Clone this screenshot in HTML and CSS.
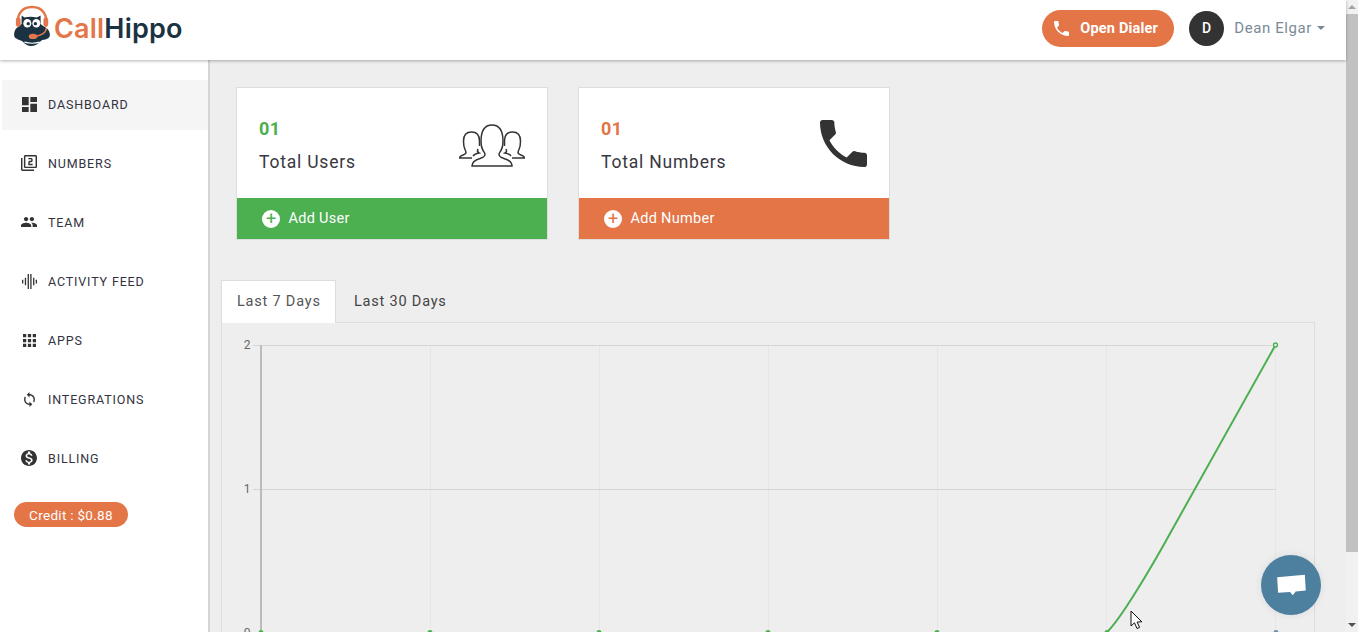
FILE: index.html
```html
<!DOCTYPE html>
<html lang="en">
<head>
    <meta charset="UTF-8">
    <title>CallHippo Dashboard</title>
    <link rel="stylesheet" href="styles.css">
</head>
<body>
<div class="app">
    <div class="main">
        <header class="topbar">
            <a class="logo">
                <svg class="logo-mark" viewBox="0 0 40 44" width="38" height="42">
                    <path d="M2 35c-3-2-2-7 0-10 2-2 4-3 6-5l0-9 3 2c4-1 9-1 13 0l4-2 0 9c2 2 5 3 7 5 3 3 4 8 1 10-3 2-6 1-8 3-3 3-6 5-10 5s-6-2-8-4c-2-2-5-2-8-4z" fill="#1b3243"/>
                    <path d="M5 21C2 12 7 2 19 2s17 10 14 19" fill="none" stroke="#e4774a" stroke-width="2.600"/>
                    <rect x="2" y="13" width="5" height="10" rx="2.500" fill="#e4774a"/>
                    <rect x="31" y="13" width="5" height="10" rx="2.500" fill="#e4774a"/>
                    <ellipse cx="14" cy="19" rx="4.200" ry="4.500" fill="#fff"/>
                    <ellipse cx="23.500" cy="19" rx="4.200" ry="4.500" fill="#fff"/>
                    <circle cx="15" cy="19.500" r="1.800" fill="#1b3243"/>
                    <circle cx="22.500" cy="19.500" r="1.800" fill="#1b3243"/>
                    <path d="M34 24c0 5-6 8-13 9" fill="none" stroke="#e4774a" stroke-width="1.600"/>
                    <ellipse cx="20" cy="33" rx="4.500" ry="2.800" fill="#e4774a"/>
                    <path d="M11 39c5 1.500 11 1.500 16 0" fill="none" stroke="#fff" stroke-width="1.200"/>
                </svg>
                <span class="logo-text"><span class="logo-call">Call</span>Hippo</span>
            </a>
            <div class="topbar-right">
                <button class="dialer-btn">
                    <svg viewBox="3 3 18 18" width="15" height="15"><path fill="#fff" d="M6.620 10.790c1.440 2.830 3.760 5.140 6.590 6.590l2.200-2.200c.27-.27.67-.36 1.020-.24 1.120.37 2.330.57 3.570.57.55 0 1 .45 1 1V20c0 .55-.45 1-1 1-9.390 0-17-7.610-17-17 0-.55.45-1 1-1h3.500c.55 0 1 .45 1 1 0 1.250.2 2.450.57 3.570.11.35.03.74-.25 1.020l-2.200 2.200z"/></svg>
                    Open Dialer
                </button>
                <div class="avatar">D</div>
                <div class="user-name">Dean Elgar<span class="caret"></span></div>
            </div>
        </header>

        <div class="body">
            <nav class="sidebar">
                <a class="nav-item active">
                    <span class="nav-slot"><svg class="nav-icon" width="15" height="15" viewBox="3 3 18 18"><path d="M3 13h8V3H3v10zm0 8h8v-6H3v6zm10 0h8V11h-8v10zm0-18v6h8V3h-8z"/></svg></span>
                    DASHBOARD
                </a>
                <a class="nav-item">
                    <span class="nav-slot"><svg class="nav-icon" width="16" height="16" viewBox="1 1 22 22"><path d="M3 5H1v16c0 1.100.9 2 2 2h16v-2H3V5zm18-4H7c-1.100 0-2 .9-2 2v14c0 1.100.9 2 2 2h14c1.100 0 2-.9 2-2V3c0-1.100-.9-2-2-2zm0 16H7V3h14v14zm-4-4h-4v-2h2c1.100 0 2-.89 2-2V7c0-1.110-.9-2-2-2h-4v2h4v2h-2c-1.100 0-2 .89-2 2v4h6v-2z"/></svg></span>
                    NUMBERS
                </a>
                <a class="nav-item">
                    <span class="nav-slot"><svg class="nav-icon" width="16" height="16" viewBox="1 1 22 22"><path d="M16 11c1.660 0 2.990-1.340 2.990-3S17.660 5 16 5c-1.660 0-3 1.340-3 3s1.340 3 3 3zm-8 0c1.660 0 2.990-1.340 2.990-3S9.660 5 8 5C6.340 5 5 6.340 5 8s1.340 3 3 3zm0 2c-2.330 0-7 1.170-7 3.500V19h14v-2.500c0-2.330-4.670-3.500-7-3.500zm8 0c-.29 0-.62.02-.97.05 1.160.84 1.970 1.970 1.970 3.450V19h6v-2.500c0-2.330-4.670-3.500-7-3.500z"/></svg></span>
                    TEAM
                </a>
                <a class="nav-item">
                    <span class="nav-slot"><svg class="nav-icon" width="15" height="15" viewBox="0 0 16 16"><path d="M0 6h1.400v4H0zM3 4h1.400v8H3zM6 0h1.400v16H6zM8.800 0h1.400v16H8.800zM11.800 4h1.400v8h-1.400zM14.600 6H16v4h-1.400z"/></svg></span>
                    ACTIVITY FEED
                </a>
                <a class="nav-item">
                    <span class="nav-slot"><svg class="nav-icon" width="13" height="13" viewBox="4 4 16 16"><path d="M4 8h4V4H4v4zm6 12h4v-4h-4v4zm-6 0h4v-4H4v4zm0-6h4v-4H4v4zm6 0h4v-4h-4v4zm6-10v4h4V4h-4zm-6 4h4V4h-4v4zm6 6h4v-4h-4v4zm0 6h4v-4h-4v4z"/></svg></span>
                    APPS
                </a>
                <a class="nav-item">
                    <span class="nav-slot"><svg class="nav-icon" width="13" height="15" viewBox="4 1 16 22"><path d="M12 4V1L8 5l4 4V6c3.310 0 6 2.690 6 6 0 1.010-.25 1.970-.7 2.800l1.460 1.460C19.540 15.030 20 13.570 20 12c0-4.420-3.580-8-8-8zm0 14c-3.310 0-6-2.690-6-6 0-1.010.25-1.970.7-2.800L5.240 7.740C4.460 8.970 4 10.430 4 12c0 4.420 3.580 8 8 8v3l4-4-4-4v3z"/></svg></span>
                    INTEGRATIONS
                </a>
                <a class="nav-item">
                    <span class="nav-slot"><svg class="nav-icon" width="16" height="16" viewBox="2 2 20 20"><path d="M12 2C6.480 2 2 6.480 2 12s4.480 10 10 10 10-4.480 10-10S17.520 2 12 2zm1.410 16.090V20h-2.670v-1.930c-1.710-.36-3.160-1.460-3.270-3.400h1.960c.1 1.050.82 1.870 2.650 1.870 1.960 0 2.400-.98 2.400-1.590 0-.83-.44-1.610-2.670-2.140-2.480-.6-4.180-1.620-4.180-3.670 0-1.720 1.390-2.840 3.110-3.210V4h2.670v1.950c1.860.45 2.790 1.860 2.850 3.390H14.300c-.05-1.110-.64-1.870-2.220-1.870-1.500 0-2.400.68-2.400 1.640 0 .84.65 1.390 2.670 1.910s4.180 1.390 4.180 3.910c-.01 1.830-1.380 2.830-3.120 3.160z"/></svg></span>
                    BILLING
                </a>
                <div class="credit">Credit : $0.88</div>
            </nav>

            <main class="content">
                <div class="cards">
                    <div class="card">
                        <div class="card-body">
                            <div class="card-text">
                                <div class="card-count green">01</div>
                                <div class="card-label">Total Users</div>
                            </div>
                            <svg class="users-icon" viewBox="0 0 66 43" width="66" height="43" fill="none" stroke="#333" stroke-width="1.500">
                                <path d="M13 42c0-4 3-6 8-7.500 3-1 5-2 5-4 0-1.500-1-2.500-2-4-1.500-2.500-2-5-2-9C22 7 25 1 33 1s11 6 11 16.500c0 4-.5 6.500-2 9-1 1.500-2 2.500-2 4 0 2 2 3 5 4 5 1.500 8 3.500 8 7.500z"/>
                                <path d="M20.500 22v-5C20.500 11 17.500 8 12.500 8S4.500 11 4.500 17c0 4 .5 6.500 1.500 8.500.5 1 1 2 1 3 0 1.500-1.500 2-3 2.500-2 .7-3.300 1.700-3.500 3H13"/>
                                <path d="M19 25c-1 2-1 3 1 4-3 .5-5 1.500-6 3"/>
                                <g transform="translate(66 0) scale(-1 1)">
                                    <path d="M20.500 22v-5C20.500 11 17.500 8 12.500 8S4.500 11 4.500 17c0 4 .5 6.500 1.500 8.500.5 1 1 2 1 3 0 1.500-1.500 2-3 2.500-2 .7-3.300 1.700-3.500 3H13"/>
                                    <path d="M19 25c-1 2-1 3 1 4-3 .5-5 1.500-6 3"/>
                                </g>
                            </svg>
                        </div>
                        <a class="card-foot green-bg">
                            <span class="plus green">+</span>
                            Add User
                        </a>
                    </div>
                    <div class="card">
                        <div class="card-body">
                            <div class="card-text">
                                <div class="card-count orange">01</div>
                                <div class="card-label">Total Numbers</div>
                            </div>
                            <svg class="phone-icon" viewBox="3 3 18 18" width="47" height="47"><path fill="#333" d="M6.620 10.790c1.440 2.830 3.760 5.140 6.590 6.590l2.200-2.200c.27-.27.67-.36 1.020-.24 1.120.37 2.330.57 3.570.57.55 0 1 .45 1 1V20c0 .55-.45 1-1 1-9.390 0-17-7.610-17-17 0-.55.45-1 1-1h3.500c.55 0 1 .45 1 1 0 1.250.2 2.450.57 3.570.11.35.03.74-.25 1.020l-2.200 2.200z"/></svg>
                        </div>
                        <a class="card-foot orange-bg">
                            <span class="plus orange">+</span>
                            Add Number
                        </a>
                    </div>
                </div>

                <div class="tabs">
                    <a class="tab active">Last 7 Days</a>
                    <a class="tab">Last 30 Days</a>
                </div>
                <div class="chart-panel">
                    <svg class="chart" viewBox="222 323 1092 320" width="1092" height="320">
                        <path stroke="#e6e6e6" d="M430.500 345V640M599.500 345V640M768.500 345V640M937.500 345V640M1106.500 345V640M1275.500 345V640"/>
                        <path stroke="#d6d6d6" d="M253 345.500H1276M253 489.500H1276"/>
                        <path d="M261 345V640" stroke="#bbb" stroke-width="2"/>
                        <g class="axis-label">
                            <text x="247" y="349">2</text>
                            <text x="247" y="493">1</text>
                            <text x="247" y="637">0</text>
                        </g>
                        <path d="M1107 632C1120 620 1150 570 1172 530L1275.500 345" fill="none" stroke="#4caf50" stroke-width="2"/>
                        <circle cx="1275.500" cy="345" r="2" fill="#eee" stroke="#4caf50" stroke-width="1.300"/>
                        <g fill="#4caf50">
                            <circle cx="261" cy="632.500" r="2.500"/>
                            <circle cx="430" cy="632.500" r="2.500"/>
                            <circle cx="599" cy="632.500" r="2.500"/>
                            <circle cx="768" cy="632.500" r="2.500"/>
                            <circle cx="937" cy="632.500" r="2.500"/>
                            <circle cx="1107" cy="632.500" r="2.500"/>
                        </g>
                        <circle cx="1276" cy="632.500" r="2.500" fill="#6f8fa8"/>
                    </svg>
                </div>
            </main>
        </div>
    </div>

    <div class="scrollbar">
        <div class="arrow-up"></div>
        <div class="thumb"></div>
        <div class="track"></div>
        <div class="arrow-down"></div>
    </div>
</div>

<button class="chat-btn">
    <svg viewBox="0 0 32 26" width="30" height="24"><path fill="#fff" d="M1 4.500 31 2l1 17-11 1-3 4-3-3.500-13 1z"/></svg>
</button>
<svg class="cursor" viewBox="0 0 14 20" width="14" height="20"><path fill="#fff" stroke="#111" d="M1 1v15l3.500-3.200 2.500 5.700 2.600-1.100-2.500-5.400 4.700-.2z"/></svg>
</body>
</html>
```

FILE: styles.css
```css
* {
    box-sizing: border-box;
}

body {
    margin: 0;
    font-family: Roboto, "Liberation Sans", sans-serif;
    background-color: #eeeeee;
    color: #333;
    overflow: hidden;
}

.app {
    display: flex;
    height: 100vh;
    overflow: hidden;
}

.main {
    flex: 1;
    min-width: 0;
    display: flex;
    flex-direction: column;
}

/* top bar */
.topbar {
    flex: none;
    height: 60px;
    background-color: #fff;
    box-shadow: 0 1px 3px rgba(0, 0, 0, 0.3);
    display: flex;
    align-items: center;
    justify-content: space-between;
    padding: 0 21px 0 14px;
    position: relative;
    z-index: 2;
}

.logo {
    display: flex;
    align-items: center;
    gap: 2px;
    margin-top: -8px;
}

.logo-mark {
    display: block;
}

.logo-text {
    font-family: Inter, sans-serif;
    font-size: 27px;
    font-weight: 600;
    letter-spacing: 0.2px;
    color: #1b3243;
    margin-top: 4px;
}

.logo-call {
    color: #e4774a;
}

.topbar-right {
    display: flex;
    align-items: center;
    margin-top: -4px;
}

.dialer-btn {
    display: flex;
    align-items: center;
    gap: 11px;
    width: 132px;
    height: 37px;
    padding: 0 12px;
    border: 0;
    border-radius: 19px;
    background-color: #e37547;
    color: #fff;
    font-family: inherit;
    font-size: 14.500px;
    font-weight: 700;
    letter-spacing: 0.2px;
}

.avatar {
    width: 35px;
    height: 35px;
    margin-left: 15px;
    border-radius: 50%;
    background-color: #333;
    color: #fff;
    font-size: 14px;
    font-weight: 500;
    display: flex;
    align-items: center;
    justify-content: center;
}

.user-name {
    margin-left: 10px;
    color: #7b8a97;
    font-size: 15px;
    letter-spacing: 0.6px;
    display: flex;
    align-items: center;
}

.caret {
    margin-left: 5px;
    border-top: 4px solid #7b8a97;
    border-left: 4px solid transparent;
    border-right: 4px solid transparent;
}

.body {
    flex: 1;
    min-height: 0;
    display: flex;
}

/* sidebar */
.sidebar {
    flex: none;
    width: 210px;
    padding: 20px 0 0 2px;
    background-color: #fff;
    border-right: 2px solid #d4d4d4;
}

.nav-item {
    display: flex;
    align-items: center;
    height: 50px;
    margin-bottom: 9px;
    padding: 0 0 2px 18px;
    font-size: 12.500px;
    letter-spacing: 0.85px;
    color: #333340;
}

.nav-item.active {
    background-color: #f5f5f5;
}

.nav-slot {
    flex: none;
    width: 18px;
    margin-right: 10px;
    display: flex;
    justify-content: center;
}

.nav-icon {
    display: block;
    fill: #333;
}

.credit {
    width: 114px;
    height: 25px;
    margin: 18px 0 0 12px;
    border-radius: 13px;
    background-color: #e37547;
    color: #fff;
    font-size: 13.500px;
    letter-spacing: 0.3px;
    display: flex;
    align-items: center;
    justify-content: center;
}

/* content */
.content {
    flex: 1;
    min-width: 0;
    padding: 27px 31px 0 11px;
}

.cards {
    display: flex;
    gap: 30px;
    margin-left: 15px;
}

.card {
    width: 312px;
    height: 153px;
    background-color: #fff;
    border: 1px solid #dddddd;
    display: flex;
    flex-direction: column;
}

.card-body {
    flex: 1;
    display: flex;
    align-items: center;
    justify-content: space-between;
    padding: 0 22px;
}

.card-text {
    padding-top: 3px;
}

.card-count {
    font-size: 18px;
    font-weight: 700;
    letter-spacing: 0.5px;
    margin-bottom: 13px;
}

.card-label {
    font-size: 17.500px;
    letter-spacing: 0.8px;
    color: #38383f;
}

.users-icon {
    margin-top: 4px;
}

.green {
    color: #4caf50;
}

.orange {
    color: #e37547;
}

.green-bg {
    background-color: #4caf50;
}

.orange-bg {
    background-color: #e37547;
}

.card-foot {
    flex: none;
    height: 41px;
    padding-left: 25px;
    color: #fff;
    font-size: 14.500px;
    letter-spacing: 0.3px;
    display: flex;
    align-items: center;
    gap: 8.500px;
}

.plus {
    width: 18px;
    height: 18px;
    border-radius: 50%;
    background-color: #fff;
    font-size: 18px;
    line-height: 18px;
    letter-spacing: 0;
    text-align: center;
}

/* tabs + chart */
.tabs {
    display: flex;
    margin-top: 40px;
    position: relative;
    z-index: 1;
}

.tab {
    height: 43px;
    padding: 0 18px 1px;
    font-size: 14.500px;
    letter-spacing: 0.8px;
    white-space: nowrap;
    color: #444;
    display: flex;
    align-items: center;
}

.tab.active {
    padding: 0 15px 2px;
    width: 115px;
    background-color: #fff;
    border: 1px solid #ddd;
    border-bottom: 0;
    color: #555;
}

.chart-panel {
    height: 340px;
    margin-top: -1px;
    border: 1px solid #dddddd;
}

.chart {
    display: block;
}

.axis-label {
    font-size: 12px;
    fill: #666;
    text-anchor: middle;
}

/* fake window scrollbar */
.scrollbar {
    flex: none;
    width: 12px;
    background-color: #f1f1f1;
    display: flex;
    flex-direction: column;
    align-items: center;
}

.arrow-up,
.arrow-down {
    flex: none;
    width: 0;
    height: 0;
    margin: 5px 0;
    border-left: 4px solid transparent;
    border-right: 4px solid transparent;
}

.arrow-up {
    border-bottom: 4px solid #a3a3a3;
}

.arrow-down {
    border-top: 4px solid #505050;
}

.thumb {
    flex: none;
    width: 100%;
    height: 538px;
    background-color: #c1c1c1;
}

.track {
    flex: 1;
}

/* overlays */
.chat-btn {
    position: absolute;
    left: 1261px;
    top: 555px;
    width: 60px;
    height: 60px;
    padding: 0;
    border: 0;
    border-radius: 50%;
    background-color: #4d7f9e;
    box-shadow: 0 0 8px rgba(0, 0, 0, 0.08);
    display: flex;
    align-items: center;
    justify-content: center;
}

.cursor {
    position: absolute;
    left: 1130px;
    top: 610px;
}
```
